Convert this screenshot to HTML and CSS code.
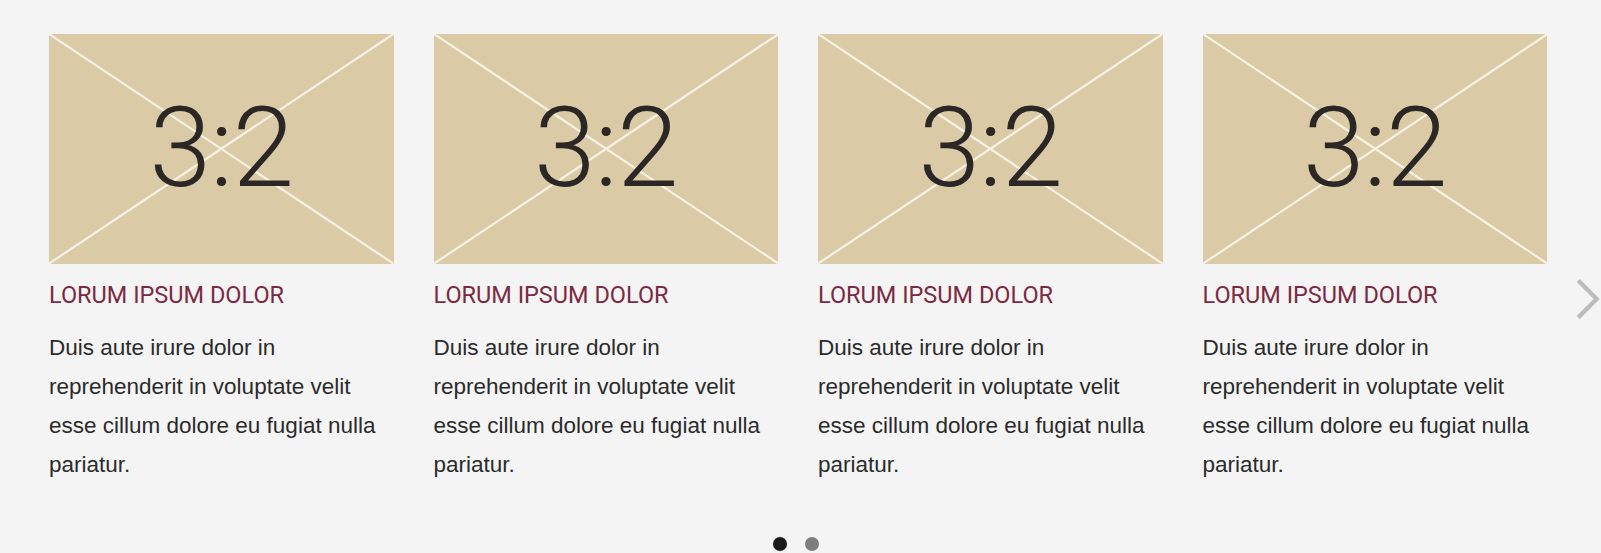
FILE: index.html
```html
<!DOCTYPE html>
<html lang="en">
<head>
    <meta charset="UTF-8">
    <meta name="viewport" content="width=device-width, initial-scale=1.0">
    <title>Card Carousel</title>
    <link rel="stylesheet" href="styles.css">
</head>
<body>
    <div class="carousel">
        <div class="track">
            <div class="card">
                <div class="thumb">
                    <svg class="cross" viewBox="0 0 100 100" preserveAspectRatio="none">
                        <line x1="0" y1="0" x2="100" y2="100" />
                        <line x1="100" y1="0" x2="0" y2="100" />
                    </svg>
                    <span class="ratio">3:2</span>
                </div>
                <h3 class="card-title">LORUM IPSUM DOLOR</h3>
                <p class="card-text">Duis aute irure dolor in reprehenderit in voluptate velit esse cillum dolore eu fugiat nulla pariatur.</p>
            </div>
            <div class="card">
                <div class="thumb">
                    <svg class="cross" viewBox="0 0 100 100" preserveAspectRatio="none">
                        <line x1="0" y1="0" x2="100" y2="100" />
                        <line x1="100" y1="0" x2="0" y2="100" />
                    </svg>
                    <span class="ratio">3:2</span>
                </div>
                <h3 class="card-title">LORUM IPSUM DOLOR</h3>
                <p class="card-text">Duis aute irure dolor in reprehenderit in voluptate velit esse cillum dolore eu fugiat nulla pariatur.</p>
            </div>
            <div class="card">
                <div class="thumb">
                    <svg class="cross" viewBox="0 0 100 100" preserveAspectRatio="none">
                        <line x1="0" y1="0" x2="100" y2="100" />
                        <line x1="100" y1="0" x2="0" y2="100" />
                    </svg>
                    <span class="ratio">3:2</span>
                </div>
                <h3 class="card-title">LORUM IPSUM DOLOR</h3>
                <p class="card-text">Duis aute irure dolor in reprehenderit in voluptate velit esse cillum dolore eu fugiat nulla pariatur.</p>
            </div>
            <div class="card">
                <div class="thumb">
                    <svg class="cross" viewBox="0 0 100 100" preserveAspectRatio="none">
                        <line x1="0" y1="0" x2="100" y2="100" />
                        <line x1="100" y1="0" x2="0" y2="100" />
                    </svg>
                    <span class="ratio">3:2</span>
                </div>
                <h3 class="card-title">LORUM IPSUM DOLOR</h3>
                <p class="card-text">Duis aute irure dolor in reprehenderit in voluptate velit esse cillum dolore eu fugiat nulla pariatur.</p>
            </div>
        </div>

        <button class="next" aria-label="Next">
            <svg viewBox="0 0 24 40">
                <polyline points="3,3 20,20 3,37" />
            </svg>
        </button>

        <div class="dots">
            <span class="dot active"></span>
            <span class="dot"></span>
        </div>
    </div>
</body>
</html>
```

FILE: styles.css
```css
body {
    margin: 0;
    background-color: #f4f4f4;
    font-family: "Liberation Sans", Arial, sans-serif;
    color: #2b2b2b;
}
.carousel {
    position: relative;
    padding: 34px 54px 0 49px;
}
.track {
    display: grid;
    grid-template-columns: repeat(4, 1fr);
    column-gap: 40px;
}
.thumb {
    position: relative;
    aspect-ratio: 3 / 2;
    background-color: #dacaa6;
    display: flex;
    align-items: center;
    justify-content: center;
    overflow: hidden;
}
.cross {
    position: absolute;
    inset: 0;
    width: 100%;
    height: 100%;
}
.cross line {
    stroke: #f7f2e6;
    stroke-width: 2.2;
    vector-effect: non-scaling-stroke;
}
.ratio {
    position: relative;
    font-family: "Roboto", "Lato", sans-serif;
    font-weight: 300;
    font-size: 111px;
    line-height: 1;
    color: #2a2724;
    letter-spacing: -1px;
}
.card-title {
    margin: 17px 0 0;
    font-family: "Roboto", "Liberation Sans", sans-serif;
    font-weight: 400;
    font-size: 23.5px;
    line-height: 28px;
    color: #7b2a41;
}
.card-text {
    margin: 19px 0 0;
    font-size: 22.5px;
    line-height: 39px;
}
.next {
    position: absolute;
    top: 277px;
    right: 0;
    width: 26px;
    height: 44px;
    padding: 0;
    border: none;
    background: none;
    cursor: pointer;
}
.next svg {
    width: 100%;
    height: 100%;
}
.next polyline {
    fill: none;
    stroke: #bcbcbc;
    stroke-width: 4;
}
.dots {
    display: flex;
    justify-content: center;
    gap: 18px;
    margin-top: 53px;
    padding-right: 4px;
}
.dot {
    width: 14px;
    height: 14px;
    border-radius: 50%;
    background-color: #7e7e7e;
}
.dot.active {
    background-color: #1b1b1b;
}
```
